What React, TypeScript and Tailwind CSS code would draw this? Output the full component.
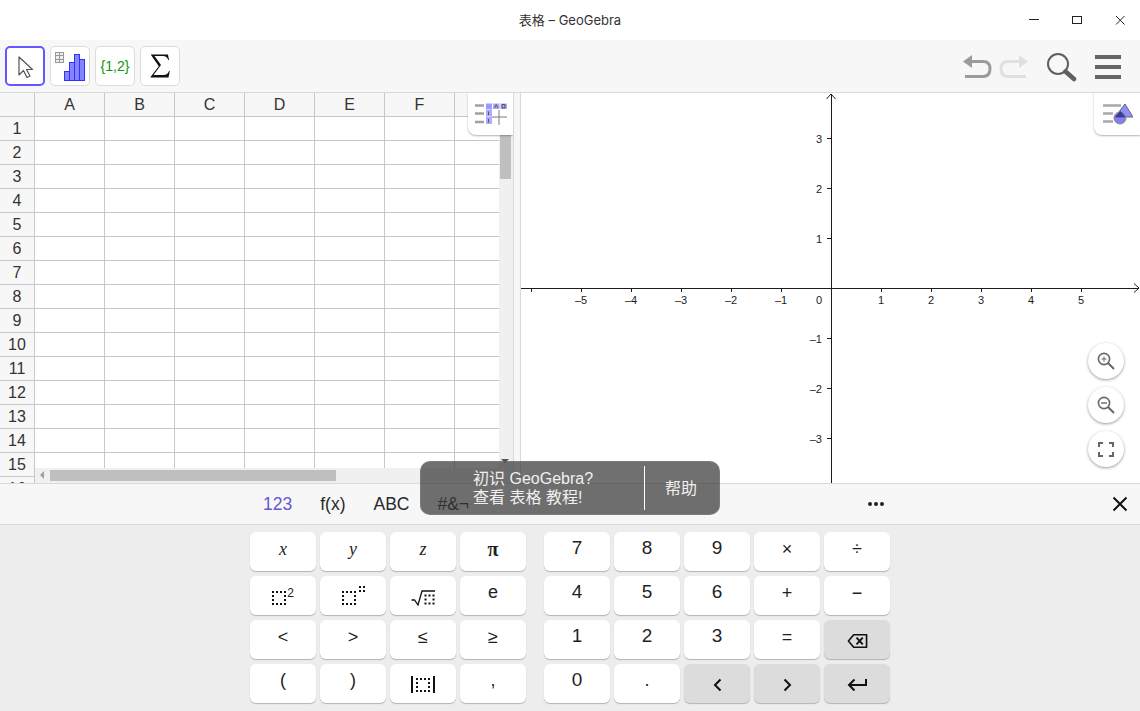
import React from "react";

const font = "font-['Liberation_Sans','Noto_Sans_CJK_SC',sans-serif]";
const cols = ["A", "B", "C", "D", "E", "F", ""];
const rows = Array.from({ length: 16 }, (_, i) => i + 1);

function dots(nx: number, ny: number, ox = 0, oy = 0) {
  const out: React.ReactNode[] = [];
  for (let i = 0; i <= nx; i++) {
    for (let j = 0; j <= ny; j++) {
      if (i === 0 || j === 0 || i === nx || j === ny) {
        out.push(<rect key={`${i}-${j}`} x={ox + i * 4} y={oy + j * 4} width="2" height="2" fill="#111" />);
      }
    }
  }
  return out;
}

function Dotted({ nx = 3, ny = 3 }: { nx?: number; ny?: number }) {
  const w = nx * 4 + 2;
  const h = ny * 4 + 2;
  return (
    <svg width={w} height={h} viewBox={`0 0 ${w} ${h}`} className="shrink-0 block">
      {dots(nx, ny)}
    </svg>
  );
}

function Key({ children, dark, className = "" }: { children: React.ReactNode; dark?: boolean; className?: string }) {
  return (
    <div
      className={`w-[66px] h-[39px] rounded-[6px] flex items-center justify-center text-[18px] text-[#1f1f1f] shadow-[0_1px_1px_rgba(0,0,0,0.25)] ${dark ? "bg-[#dcdcdc]" : "bg-white"} ${className}`}
    >
      {children}
    </div>
  );
}

function ToolButton({ active, children }: { active?: boolean; children: React.ReactNode }) {
  return (
    <div
      className={`w-10 h-10 rounded-[5px] bg-white flex items-center justify-center ${active ? "border-2 border-[#6557ff]" : "border border-[#dcdcdc]"}`}
    >
      {children}
    </div>
  );
}

function Graph() {
  const xs = [-6, -5, -4, -3, -2, -1, 1, 2, 3, 4, 5];
  const ys = [-3, -2, -1, 1, 2, 3];
  const ox = 310;
  const oy = 195;
  return (
    <svg width="619" height="390" className="block" style={{ fontFamily: "Liberation Sans, sans-serif" }}>
      <path d={`M0 ${oy}H618M${ox} 390V1`} stroke="#1c1c1f" strokeWidth="1" shapeRendering="crispEdges" fill="none" />
      <path d={`M613 ${oy - 4.5}L618 ${oy}L613 ${oy + 4.5}M${ox - 4.5} 6L${ox} 1L${ox + 4.5} 6`} stroke="#1c1c1f" fill="none" />
      {xs.map((x) => (
        <g key={x}>
          <path d={`M${ox + x * 50} ${oy}v4`} stroke="#1c1c1f" shapeRendering="crispEdges" />
          {x !== -6 && (
            <text x={ox + x * 50} y={oy + 16} textAnchor="middle" fontSize="11" fill="#1c1c1f">
              {x < 0 ? `–${-x}` : x}
            </text>
          )}
        </g>
      ))}
      {ys.map((y) => (
        <g key={y}>
          <path d={`M${ox - 4} ${oy - y * 50}h4`} stroke="#1c1c1f" shapeRendering="crispEdges" />
          <text x={ox - 9} y={oy - y * 50 + 5} textAnchor="end" fontSize="11" fill="#1c1c1f">
            {y < 0 ? `–${-y}` : y}
          </text>
        </g>
      ))}
      <text x={ox - 9} y={oy + 16} textAnchor="end" fontSize="11" fill="#1c1c1f">0</text>
    </svg>
  );
}

function RoundBtn({ children }: { children: React.ReactNode }) {
  return (
    <div className="w-9 h-9 rounded-full bg-white flex items-center justify-center shadow-[0_1px_3px_rgba(0,0,0,0.4)]">
      {children}
    </div>
  );
}

export default function App() {
  return (
    <div className={`w-[1140px] h-[711px] overflow-hidden relative bg-white flex flex-col ${font}`}>
      {/* title bar */}
      <div className="h-10 shrink-0 bg-white relative flex items-center justify-center">
        <span className="mt-[1px] text-[13px] text-[#333] font-['Inter','Noto_Sans_CJK_SC',sans-serif]">表格 – GeoGebra</span>
        <div className="absolute right-0 top-0 h-10 flex items-center">
          <svg width="43" height="40"><path d="M15 19.5H25" stroke="#222" shapeRendering="crispEdges" /></svg>
          <svg width="43" height="40"><rect x="15.5" y="16.5" width="9" height="7" fill="none" stroke="#222" /></svg>
          <svg width="40" height="40"><path d="M16 16L24.5 24.5M24.5 16L16 24.5" stroke="#222" fill="none" /></svg>
        </div>
      </div>

      {/* toolbar */}
      <div className="h-[53px] shrink-0 bg-[#f7f7f7] border-b border-[#d9d9d9] flex items-start justify-between pt-[6px] pl-[5px]">
        <div className="flex gap-[5px]">
          <ToolButton active>
            <svg width="24" height="30" viewBox="0 0 24 30">
              <path d="M6 6V24L10.5 19.5L14 26.5L17 25L13.5 18.5H19.5Z" fill="#fff" stroke="#555" strokeWidth="1.2" strokeLinejoin="round" />
            </svg>
          </ToolButton>
          <ToolButton>
            <svg width="38" height="38" viewBox="0 0 38 38">
              <path d="M4.5 5.5h8v10h-8zM4.5 8.8h8M4.5 12.2h8M8.5 5.5v10" fill="#eee" stroke="#999" shapeRendering="crispEdges" />
              <path d="M13.5 24.5h5v8.5h-5zM18.5 15.5h5v17.5h-5zM23.5 7.5h5v25.5h-5zM28.5 12.5h5v20.5h-5z" fill="#8585ff" stroke="#3030ff" strokeWidth="1" shapeRendering="crispEdges" />
            </svg>
          </ToolButton>
          <ToolButton>
            <span className="text-[14px] text-[#0a960a]">{"{1,2}"}</span>
          </ToolButton>
          <ToolButton>
            <svg width="24" height="26" viewBox="0 0 24 26">
              <path d="M3 1.5H20L21 7H20.2C19.2 4 17.5 3 15 3H6.5L13 12L5.5 22H15.5C18.5 22 20 20.5 21 18H21.8L20.5 24.5H2.5V24L10.8 13.2L3 2Z" fill="#111" />
            </svg>
          </ToolButton>
        </div>
        <div className="flex items-center mt-[6px]">
          <svg width="32" height="28" viewBox="0 0 32 28" className="mr-[5px]">
            <path d="M9 7.5H22C27 7.5 29 10 29 14.5C29 19 27 22.5 22 22.5H4" fill="none" stroke="#9b9b9b" strokeWidth="3" />
            <path d="M2 7.5L11 1V14Z" fill="#9b9b9b" />
          </svg>
          <svg width="32" height="28" viewBox="0 0 32 28" className="mr-[15px]">
            <path d="M23 7.5H10C5 7.5 3 10 3 14.5C3 19 5 22.5 10 22.5H28" fill="none" stroke="#e0e0e0" strokeWidth="3" />
            <path d="M30 7.5L21 1V14Z" fill="#e0e0e0" />
          </svg>
          <svg width="32" height="32" viewBox="0 0 32 32" className="mr-[18px]">
            <circle cx="13" cy="12" r="10" fill="none" stroke="#5f5f5f" strokeWidth="2" />
            <path d="M20.5 19.5L29 27" stroke="#5f5f5f" strokeWidth="4.5" strokeLinecap="round" />
          </svg>
          <div className="flex flex-col gap-[6px] mr-[19px] -mt-[3px]">
            <div className="w-[26px] h-[4px] bg-[#666]" />
            <div className="w-[26px] h-[4px] bg-[#666]" />
            <div className="w-[26px] h-[4px] bg-[#666]" />
          </div>
        </div>
      </div>

      {/* main */}
      <div className="h-[391px] shrink-0 flex border-b border-[#d9d9d9]">
        {/* spreadsheet */}
        <div className="w-[513px] shrink-0 flex overflow-hidden relative">
          <div className="w-[35px] shrink-0 bg-[#f7f7f7] border-r border-[#c8c8c8] overflow-hidden">
            <div className="h-6 border-b border-[#c8c8c8]" />
            {rows.map((r) => (
              <div key={r} className="h-6 border-b border-[#c8c8c8] flex items-center justify-center text-[16px] text-[#333]">
                {r}
              </div>
            ))}
          </div>
          <div className="flex-1 min-w-0 flex flex-col">
            <div className="flex-1 min-h-0 flex">
              <div className="flex-1 min-w-0 overflow-hidden">
                <div className="flex h-6 bg-[#f7f7f7] border-b border-[#c8c8c8]">
                  {cols.map((c, i) => (
                    <div key={i} className="w-[70px] shrink-0 border-r border-[#c8c8c8] flex items-center justify-center text-[16px] text-[#333]">
                      {c}
                    </div>
                  ))}
                </div>
                {rows.map((r) => (
                  <div key={r} className="flex h-6 border-b border-[#c8c8c8]">
                    {cols.map((_, i) => (
                      <div key={i} className="w-[70px] shrink-0 border-r border-[#c8c8c8]" />
                    ))}
                  </div>
                ))}
              </div>
              <div className="w-[14px] shrink-0 bg-[#f0f0f0] relative">
                <div className="absolute left-[1px] top-[41px] w-[11px] h-[45px] bg-[#bfbfbf]" />
                <div className="absolute left-[2px] bottom-[5px] w-0 h-0 border-x-[4px] border-x-transparent border-t-[4px] border-t-[#555]" />
              </div>
            </div>
            <div className="h-[15px] shrink-0 bg-[#f0f0f0] relative">
              <div className="absolute left-[5px] top-[3px] w-0 h-0 border-y-[4px] border-y-transparent border-r-[4px] border-r-[#a0a0a0]" />
              <div className="absolute left-[15px] top-[2px] w-[286px] h-[11px] bg-[#bfbfbf]" />
            </div>
          </div>
          <div className="absolute left-[468px] top-0 w-[45px] h-[42px] pl-[1px] bg-white rounded-bl-[8px] shadow-[0_1px_2px_rgba(0,0,0,0.3)] flex items-center justify-center">
            <svg width="32" height="24" viewBox="0 0 32 24">
              <path d="M0 3.5H9M0 11.5H9M0 20H9" stroke="#a0a0a0" strokeWidth="2.5" />
              <path d="M11 1.5h6v6h-6z" fill="#9a9aff" />
              <path d="M11 8h6v6.5h-6zM11 15h6v7h-6zM18 1.5h6.5v5.5h-6.5zM25.5 1.5h6.5v5.5h-6.5z" fill="#aaaaff" />
              <path d="M19.5 6L21.2 2.5L23 6M27 6V2.5H30V6H27M13.5 9.5V13M13.5 17V20.5" fill="none" stroke="#555" strokeWidth="1" />
              <path d="M24 8V23M17 15H32" stroke="#7a7a7a" strokeWidth="1" />
            </svg>
          </div>
        </div>
        {/* splitter */}
        <div className="w-[8px] shrink-0 bg-[#f7f7f7] border-x border-[#d9d9d9]" />
        {/* graphics */}
        <div className="flex-1 min-w-0 relative overflow-hidden">
          <Graph />
          <div className="absolute right-0 top-0 w-[46px] h-[42px] bg-white rounded-bl-[8px] shadow-[0_1px_2px_rgba(0,0,0,0.3)] flex items-center justify-center">
            <svg width="32" height="24" viewBox="0 0 32 24">
              <path d="M2 3.5H20M2 11.5H12M2 19.5H12" stroke="#a8a8a8" strokeWidth="2.5" />
              <path d="M24 2L32 15H14Z" fill="#8f8fff" stroke="#666" strokeWidth="1" />
              <circle cx="19" cy="16" r="6" fill="#8080f0" stroke="#888" strokeWidth="1" />
              <path d="M19.5 9.5L24 15H14.5Z" fill="#3a3ab0" stroke="#333" strokeWidth="0.6" />
            </svg>
          </div>
          <div className="absolute right-[16px] top-[250px] flex flex-col gap-[8px]">
            <RoundBtn>
              <svg width="20" height="20" viewBox="0 0 20 20">
                <circle cx="8" cy="8" r="5.6" fill="none" stroke="#666" strokeWidth="1.6" />
                <path d="M12 12L18 18" stroke="#666" strokeWidth="2" />
                <path d="M5.5 8H10.5M8 5.5V10.5" stroke="#666" />
              </svg>
            </RoundBtn>
            <RoundBtn>
              <svg width="20" height="20" viewBox="0 0 20 20">
                <circle cx="8" cy="8" r="5.6" fill="none" stroke="#666" strokeWidth="1.6" />
                <path d="M12 12L18 18" stroke="#666" strokeWidth="2" />
                <path d="M5 8H11" stroke="#666" strokeWidth="1.4" />
              </svg>
            </RoundBtn>
            <RoundBtn>
              <svg width="16" height="15" viewBox="0 0 16 15">
                <path d="M1 5V1H5M11 1H15V5M15 10V14H11M5 14H1V10" fill="none" stroke="#666" strokeWidth="2" />
              </svg>
            </RoundBtn>
          </div>
        </div>
      </div>

      {/* keyboard tabs */}
      <div className="h-[41px] shrink-0 bg-[#f7f7f7] border-b border-[#d9d9d9] relative text-[17.5px] text-[#2a2a2a]">
        <div className="absolute left-[263px] top-0 h-10 flex items-center gap-7 pt-[1px]">
          <span className="text-[#6557d2]">123</span>
          <span>f(x)</span>
          <span>ABC</span>
          <span>#&amp;¬</span>
        </div>
        <div className="absolute left-[868px] top-[18px] flex gap-[2px]">
          <div className="w-[4px] h-[4px] rounded-full bg-[#222]" />
          <div className="w-[4px] h-[4px] rounded-full bg-[#222]" />
          <div className="w-[4px] h-[4px] rounded-full bg-[#222]" />
        </div>
        <svg width="16" height="16" viewBox="0 0 16 16" className="absolute left-[1112px] top-[12px]">
          <path d="M1.5 1.5L14.5 14.5M14.5 1.5L1.5 14.5" stroke="#111" strokeWidth="2" />
        </svg>
      </div>

      {/* keyboard */}
      <div className="flex-1 min-h-0 bg-[#ededed] flex justify-center gap-[18px] pt-[7px]">
        <div className="grid grid-cols-[repeat(4,66px)] grid-rows-[repeat(4,39px)] gap-x-1 gap-y-[5px]">
          <Key className="pb-[5px]"><i className="font-['Liberation_Serif',serif] text-[18px]">x</i></Key>
          <Key className="pb-[5px]"><i className="font-['Liberation_Serif',serif] text-[18px]">y</i></Key>
          <Key className="pb-[5px]"><i className="font-['Liberation_Serif',serif] text-[18px]">z</i></Key>
          <Key className="pb-[5px]"><span className="font-['Liberation_Serif',serif] font-bold text-[20px]">π</span></Key>
          <Key>
            <span className="flex items-start mt-[4px]">
              <Dotted />
              <span className="text-[12px] leading-none -mt-[4px] ml-[1px]">2</span>
            </span>
          </Key>
          <Key>
            <span className="flex items-start mt-[4px]">
              <Dotted />
              <span className="-mt-[5px] ml-[3px]"><Dotted nx={1} ny={1} /></span>
            </span>
          </Key>
          <Key>
            <svg width="24" height="16" viewBox="0 0 24 16" className="mt-[5px]">
              <path d="M0.5 10H3.5L7 15L11 1H24" fill="none" stroke="#111" strokeWidth="1.3" />
              {dots(2, 2, 13.5, 4.5)}
            </svg>
          </Key>
          <Key className="pb-[6px]">e</Key>
          <Key className="pb-[4px]">&lt;</Key>
          <Key className="pb-[4px]">&gt;</Key>
          <Key className="pb-[4px]">≤</Key>
          <Key className="pb-[4px]">≥</Key>
          <Key className="pb-[6px]">(</Key>
          <Key className="pb-[6px]">)</Key>
          <Key>
            <span className="flex items-center gap-[3px] mt-[2px]">
              <span className="w-[2px] h-[17px] bg-[#111]" />
              <Dotted />
              <span className="w-[2px] h-[17px] bg-[#111]" />
            </span>
          </Key>
          <Key className="pb-[6px]">,</Key>
        </div>
        <div className="grid grid-cols-[repeat(5,66px)] grid-rows-[repeat(4,39px)] gap-x-1 gap-y-[5px]">
          <Key className="pb-[7px] text-[19px]">7</Key>
          <Key className="pb-[7px] text-[19px]">8</Key>
          <Key className="pb-[7px] text-[19px]">9</Key>
          <Key className="pb-[5px]">×</Key>
          <Key className="pb-[5px]">÷</Key>
          <Key className="pb-[7px] text-[19px]">4</Key>
          <Key className="pb-[7px] text-[19px]">5</Key>
          <Key className="pb-[7px] text-[19px]">6</Key>
          <Key className="pb-[5px]">+</Key>
          <Key className="pb-[5px]">−</Key>
          <Key className="pb-[7px] text-[19px]">1</Key>
          <Key className="pb-[7px] text-[19px]">2</Key>
          <Key className="pb-[7px] text-[19px]">3</Key>
          <Key className="pb-[5px]">=</Key>
          <Key dark>
            <svg width="21" height="16" viewBox="0 0 22 16" className="mt-[2px]">
              <path d="M1.5 8L7 1.5H20.5V14.5H7Z" fill="none" stroke="#111" strokeWidth="1.7" strokeLinejoin="round" />
              <path d="M10 4.5L16.5 11.5M16.5 4.5L10 11.5" stroke="#111" strokeWidth="2" />
            </svg>
          </Key>
          <Key className="pb-[7px] text-[19px]">0</Key>
          <Key className="pb-[7px]">.</Key>
          <Key dark>
            <svg width="9" height="14" viewBox="0 0 9 14" className="mt-[2px]"><path d="M7.5 1.5L2 7L7.5 12.5" fill="none" stroke="#111" strokeWidth="2" /></svg>
          </Key>
          <Key dark>
            <svg width="9" height="14" viewBox="0 0 9 14" className="mt-[2px]"><path d="M1.5 1.5L7 7L1.5 12.5" fill="none" stroke="#111" strokeWidth="2" /></svg>
          </Key>
          <Key dark>
            <svg width="20" height="14" viewBox="0 0 20 14" className="mt-[2px]"><path d="M19 1V7H2M7.5 1.5L2 7L7.5 12.5" fill="none" stroke="#111" strokeWidth="2" /></svg>
          </Key>
        </div>
      </div>

      {/* tooltip */}
      <div className="absolute left-[420px] top-[461px] w-[300px] h-[54px] rounded-[10px] bg-[#333333]/70 border border-[#999999]/30 flex items-center">
        <div className="w-[223px] pl-[52px] text-[16px] leading-[19px] text-[#f0f0f0]">
          <div>初识 GeoGebra?</div>
          <div>查看 表格 教程!</div>
        </div>
        <div className="w-px h-[44px] bg-white" />
        <div className="flex-1 text-center text-[16px] text-[#f0f0f0] mt-[1px] pr-[2px]">帮助</div>
      </div>
    </div>
  );
}
